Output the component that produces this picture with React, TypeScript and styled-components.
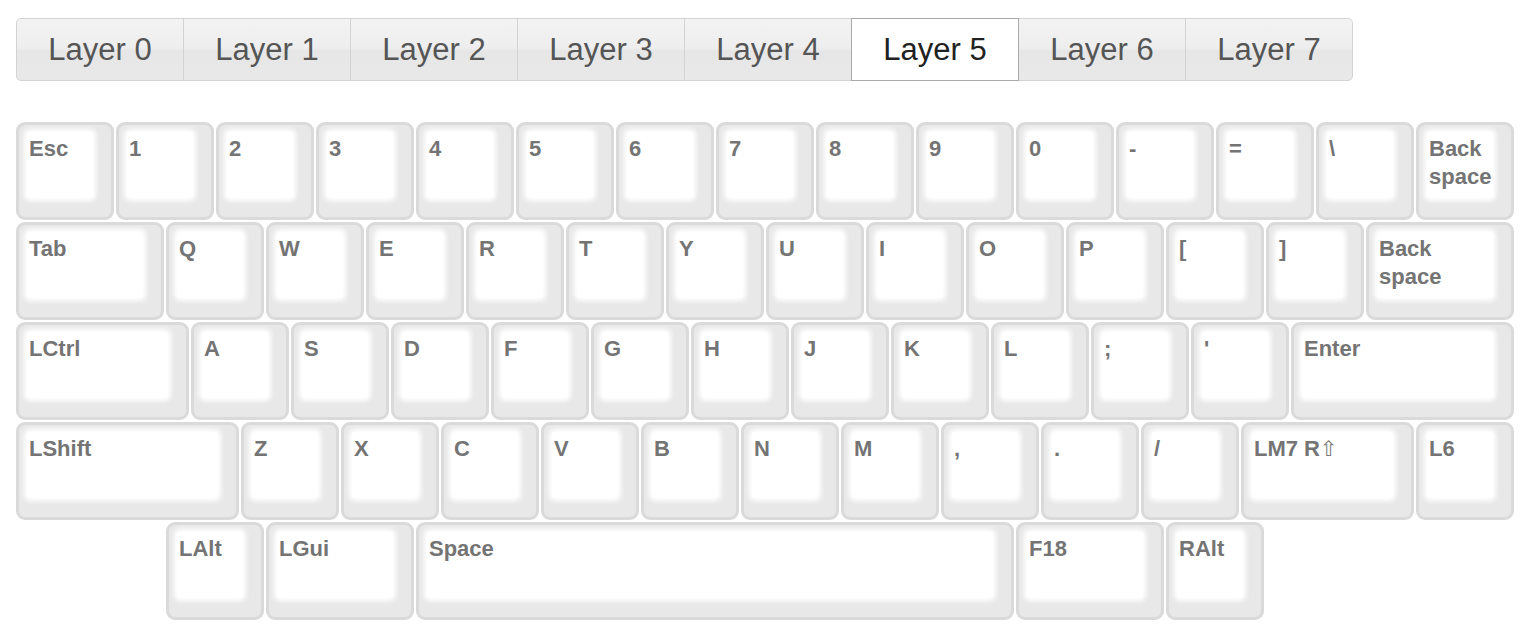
import React, { useState } from 'react';
import styled, { createGlobalStyle } from 'styled-components';

const GlobalStyle = createGlobalStyle`
  html, body {
    margin: 0;
    background: #fff;
    font-family: 'Liberation Sans', Arial, Helvetica, sans-serif;
  }
`;

const Page = styled.div`
  padding: 18px 16px;
`;

const TabBar = styled.div`
  display: flex;
`;

const Tab = styled.button<{ $active: boolean }>`
  position: relative;
  width: 168px;
  height: 63px;
  margin-left: -1px;
  padding: 0;
  border: 1px solid ${(p) => (p.$active ? '#aaaaaa' : '#d3d3d3')};
  background: ${(p) =>
    p.$active
      ? '#ffffff'
      : 'linear-gradient(to bottom, #f3f3f3 0%, #eeeeee 47%, #e6e6e6 53%, #e9e9e9 100%)'};
  color: ${(p) => (p.$active ? '#212121' : '#555555')};
  z-index: ${(p) => (p.$active ? 1 : 0)};
  font-family: 'Liberation Sans', Arial, sans-serif;
  font-size: 31px;
  cursor: pointer;

  &:first-child {
    margin-left: 0;
    border-radius: 5px 0 0 5px;
  }
  &:last-child {
    border-radius: 0 5px 5px 0;
  }
`;

const Keyboard = styled.div`
  margin-top: 41px;
  display: flex;
  flex-direction: column;
  gap: 2px;
`;

const Row = styled.div<{ $offset?: number }>`
  display: flex;
  gap: 2px;
  margin-left: ${(p) => (p.$offset ?? 0) * 100}px;
`;

const Key = styled.div<{ $w: number }>`
  box-sizing: border-box;
  width: ${(p) => p.$w * 100 - 2}px;
  height: 98px;
  display: flex;
  padding: 7px 18px 19px 8px;
  border: 3px solid #dadada;
  border-radius: 9px;
  background: #e8e8e8;
`;

const KeyTop = styled.div`
  flex: 1;
  padding: 3px 2px;
  border-radius: 3px;
  background: #ffffff;
  box-shadow: 0 0 5px 3px #ffffff;
  color: #747474;
  font-family: 'Liberation Sans', Arial, 'DejaVu Sans', sans-serif;
  font-weight: bold;
  font-size: 22px;
  line-height: 28px;
  white-space: pre-line;
`;

const Arrow = styled.span`
  font-family: 'DejaVu Sans', sans-serif;
  font-weight: normal;
  font-size: 21px;
  color: #7a7a7a;
`;

type K = [string, number?];

const rows: { offset?: number; keys: K[] }[] = [
  {
    keys: [
      ['Esc'], ['1'], ['2'], ['3'], ['4'], ['5'], ['6'], ['7'], ['8'], ['9'],
      ['0'], ['-'], ['='], ['\\'], ['Back\nspace'],
    ],
  },
  {
    keys: [
      ['Tab', 1.5], ['Q'], ['W'], ['E'], ['R'], ['T'], ['Y'], ['U'], ['I'],
      ['O'], ['P'], ['['], [']'], ['Back\nspace', 1.5],
    ],
  },
  {
    keys: [
      ['LCtrl', 1.75], ['A'], ['S'], ['D'], ['F'], ['G'], ['H'], ['J'], ['K'],
      ['L'], [';'], ["'"], ['Enter', 2.25],
    ],
  },
  {
    keys: [
      ['LShift', 2.25], ['Z'], ['X'], ['C'], ['V'], ['B'], ['N'], ['M'],
      [','], ['.'], ['/'], ['LM7 R⇧', 1.75], ['L6'],
    ],
  },
  {
    offset: 1.5,
    keys: [['LAlt'], ['LGui', 1.5], ['Space', 6], ['F18', 1.5], ['RAlt']],
  },
];

function Label({ text }: { text: string }) {
  if (text.includes('⇧')) {
    const [before] = text.split('⇧');
    return (
      <>
        {before}
        <Arrow>⇧</Arrow>
      </>
    );
  }
  return <>{text}</>;
}

export default function App() {
  const [layer, setLayer] = useState(5);
  return (
    <Page>
      <GlobalStyle />
      <TabBar>
        {Array.from({ length: 8 }, (_, i) => (
          <Tab key={i} $active={i === layer} onClick={() => setLayer(i)}>
            Layer {i}
          </Tab>
        ))}
      </TabBar>
      <Keyboard>
        {rows.map((row, r) => (
          <Row key={r} $offset={row.offset}>
            {row.keys.map(([label, w], k) => (
              <Key key={k} $w={w ?? 1}>
                <KeyTop>
                  <Label text={label} />
                </KeyTop>
              </Key>
            ))}
          </Row>
        ))}
      </Keyboard>
    </Page>
  );
}
